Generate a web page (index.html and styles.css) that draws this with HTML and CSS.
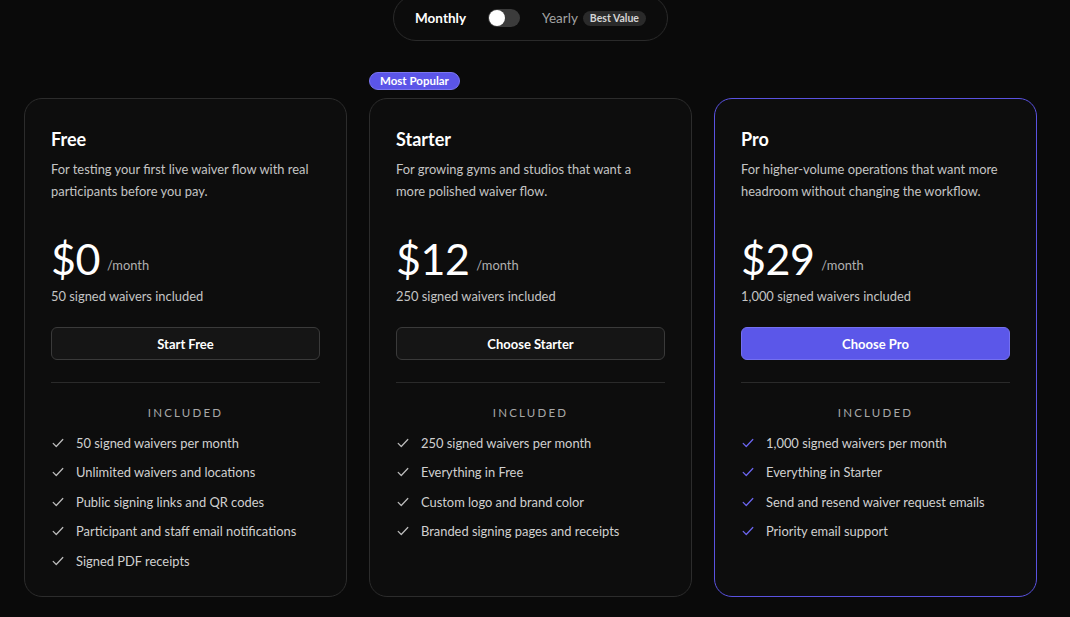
FILE: index.html
```html
<!DOCTYPE html>
<html lang="en">
<head>
    <meta charset="UTF-8">
    <meta name="viewport" content="width=device-width, initial-scale=1.0">
    <title>Pricing</title>
    <link rel="stylesheet" href="styles.css">
</head>
<body>
    <div class="page">
        <div class="billing">
            <div class="billing-toggle">
                <span class="billing-label active">Monthly</span>
                <span class="switch"><span class="knob"></span></span>
                <span class="billing-label">Yearly</span>
                <span class="best-value">Best Value</span>
            </div>
        </div>

        <div class="plans">
            <div class="plan">
                <h2 class="plan-name">Free</h2>
                <p class="plan-desc">For testing your first live waiver flow with real participants before you pay.</p>
                <div class="price"><span class="amount">$0</span><span class="per">/month</span></div>
                <p class="quota">50 signed waivers included</p>
                <button class="plan-btn">Start Free</button>
                <hr class="divider">
                <div class="included">Included</div>
                <ul class="features">
                    <li><svg class="check" viewBox="0 0 16 16"><path d="M2.5 8.5l3.5 3.5 7.5-8"/></svg>50 signed waivers per month</li>
                    <li><svg class="check" viewBox="0 0 16 16"><path d="M2.5 8.5l3.5 3.5 7.5-8"/></svg>Unlimited waivers and locations</li>
                    <li><svg class="check" viewBox="0 0 16 16"><path d="M2.5 8.5l3.5 3.5 7.5-8"/></svg>Public signing links and QR codes</li>
                    <li><svg class="check" viewBox="0 0 16 16"><path d="M2.5 8.5l3.5 3.5 7.5-8"/></svg>Participant and staff email notifications</li>
                    <li><svg class="check" viewBox="0 0 16 16"><path d="M2.5 8.5l3.5 3.5 7.5-8"/></svg>Signed PDF receipts</li>
                </ul>
            </div>

            <div class="plan">
                <span class="popular">Most Popular</span>
                <h2 class="plan-name">Starter</h2>
                <p class="plan-desc">For growing gyms and studios that want a more polished waiver flow.</p>
                <div class="price"><span class="amount">$12</span><span class="per">/month</span></div>
                <p class="quota">250 signed waivers included</p>
                <button class="plan-btn">Choose Starter</button>
                <hr class="divider">
                <div class="included">Included</div>
                <ul class="features">
                    <li><svg class="check" viewBox="0 0 16 16"><path d="M2.5 8.5l3.5 3.5 7.5-8"/></svg>250 signed waivers per month</li>
                    <li><svg class="check" viewBox="0 0 16 16"><path d="M2.5 8.5l3.5 3.5 7.5-8"/></svg>Everything in Free</li>
                    <li><svg class="check" viewBox="0 0 16 16"><path d="M2.5 8.5l3.5 3.5 7.5-8"/></svg>Custom logo and brand color</li>
                    <li><svg class="check" viewBox="0 0 16 16"><path d="M2.5 8.5l3.5 3.5 7.5-8"/></svg>Branded signing pages and receipts</li>
                </ul>
            </div>

            <div class="plan featured">
                <h2 class="plan-name">Pro</h2>
                <p class="plan-desc">For higher-volume operations that want more headroom without changing the workflow.</p>
                <div class="price"><span class="amount">$29</span><span class="per">/month</span></div>
                <p class="quota">1,000 signed waivers included</p>
                <button class="plan-btn primary">Choose Pro</button>
                <hr class="divider">
                <div class="included">Included</div>
                <ul class="features">
                    <li><svg class="check" viewBox="0 0 16 16"><path d="M2.5 8.5l3.5 3.5 7.5-8"/></svg>1,000 signed waivers per month</li>
                    <li><svg class="check" viewBox="0 0 16 16"><path d="M2.5 8.5l3.5 3.5 7.5-8"/></svg>Everything in Starter</li>
                    <li><svg class="check" viewBox="0 0 16 16"><path d="M2.5 8.5l3.5 3.5 7.5-8"/></svg>Send and resend waiver request emails</li>
                    <li><svg class="check" viewBox="0 0 16 16"><path d="M2.5 8.5l3.5 3.5 7.5-8"/></svg>Priority email support</li>
                </ul>
            </div>
        </div>
    </div>
</body>
</html>
```

FILE: styles.css
```css
* {
    box-sizing: border-box;
}
body {
    margin: 0;
    background-color: #0a0a0a;
    color: #ededed;
    font-family: Lato, "Noto Sans", sans-serif;
    overflow: hidden;
}
.page {
    width: 1013px;
    margin-left: 24px;
    margin-top: -5px;
}
.billing {
    display: flex;
    justify-content: center;
}
.billing-toggle {
    display: flex;
    align-items: center;
    height: 46px;
    padding: 0 21px;
    border: 1px solid #2a2a2a;
    border-radius: 23px;
    background-color: #0c0c0c;
    font-size: 13.5px;
}
.billing-label {
    color: #a3a3a3;
}
.billing-label.active {
    color: #fff;
    font-weight: 700;
}
.switch {
    width: 32px;
    height: 18px;
    margin: 0 22px;
    border-radius: 9px;
    background-color: #3b3b3b;
    padding: 1px;
    display: flex;
}
.knob {
    width: 16px;
    height: 16px;
    border-radius: 50%;
    background-color: #fff;
}
.best-value {
    margin-left: 5px;
    padding: 1px 7px 2px;
    border-radius: 9px;
    background-color: #2a2a2a;
    color: #d4d4d4;
    font-size: 10.5px;
    font-weight: 700;
}
.plans {
    display: grid;
    grid-template-columns: repeat(3, 1fr);
    gap: 22px;
    margin-top: 57px;
}
.plan {
    position: relative;
    height: 499px;
    padding: 28px 26px 0;
    border: 1px solid #2c2c2c;
    border-radius: 18px;
    background-color: #0d0d0d;
}
.plan.featured {
    border-color: #5a52e0;
}
.popular {
    position: absolute;
    top: -27px;
    left: -1px;
    padding: 1px 10px 2px;
    border-radius: 10px;
    background-color: #5b55e8;
    color: #fff;
    font-size: 11.5px;
    font-weight: 700;
    border: 1px solid #7a75f0;
}
.plan-name {
    margin: 0;
    font-size: 18px;
    font-weight: 700;
    color: #fff;
    line-height: 24px;
}
.plan-desc {
    margin: 7px 0 0;
    max-width: 262px;
    height: 44px;
    font-size: 12.9px;
    line-height: 22px;
    color: #c4c4c4;
}
.price {
    display: flex;
    align-items: flex-end;
    margin-top: 33px;
    height: 48px;
}
.amount {
    font-size: 43px;
    line-height: 48px;
    color: #fff;
    font-weight: 400;
    letter-spacing: -0.5px;
}
.per {
    margin: 0 0 10px 7px;
    font-size: 12.9px;
    line-height: 16px;
    color: #b0b0b0;
}
.quota {
    margin: 3px 0 0;
    font-size: 12.9px;
    color: #c4c4c4;
    line-height: 20px;
}
.plan-btn {
    display: block;
    width: 100%;
    height: 33px;
    margin-top: 21px;
    border: 1px solid #3a3a3a;
    border-radius: 6px;
    background-color: #151515;
    color: #fff;
    font-family: inherit;
    font-size: 13px;
    font-weight: 700;
}
.plan-btn.primary {
    background-color: #5b57e9;
    border-color: #7470f0;
}
.divider {
    margin: 22px 0 0;
    border: none;
    border-top: 1px solid #2a2a2a;
}
.included {
    margin-top: 23px;
    text-align: center;
    text-transform: uppercase;
    letter-spacing: 2.2px;
    font-size: 11.5px;
    color: #a8a8a8;
}
.features {
    list-style: none;
    margin: 9px 0 0;
    padding: 0;
}
.features li {
    display: flex;
    align-items: center;
    height: 29.5px;
    font-size: 12.9px;
    color: #d0d0d0;
}
.check {
    width: 14px;
    height: 14px;
    margin-right: 11px;
    fill: none;
    stroke: #bdbdbd;
    stroke-width: 1.4;
    stroke-linecap: round;
    stroke-linejoin: round;
}
.featured .check {
    stroke: #6c66f0;
}
```
